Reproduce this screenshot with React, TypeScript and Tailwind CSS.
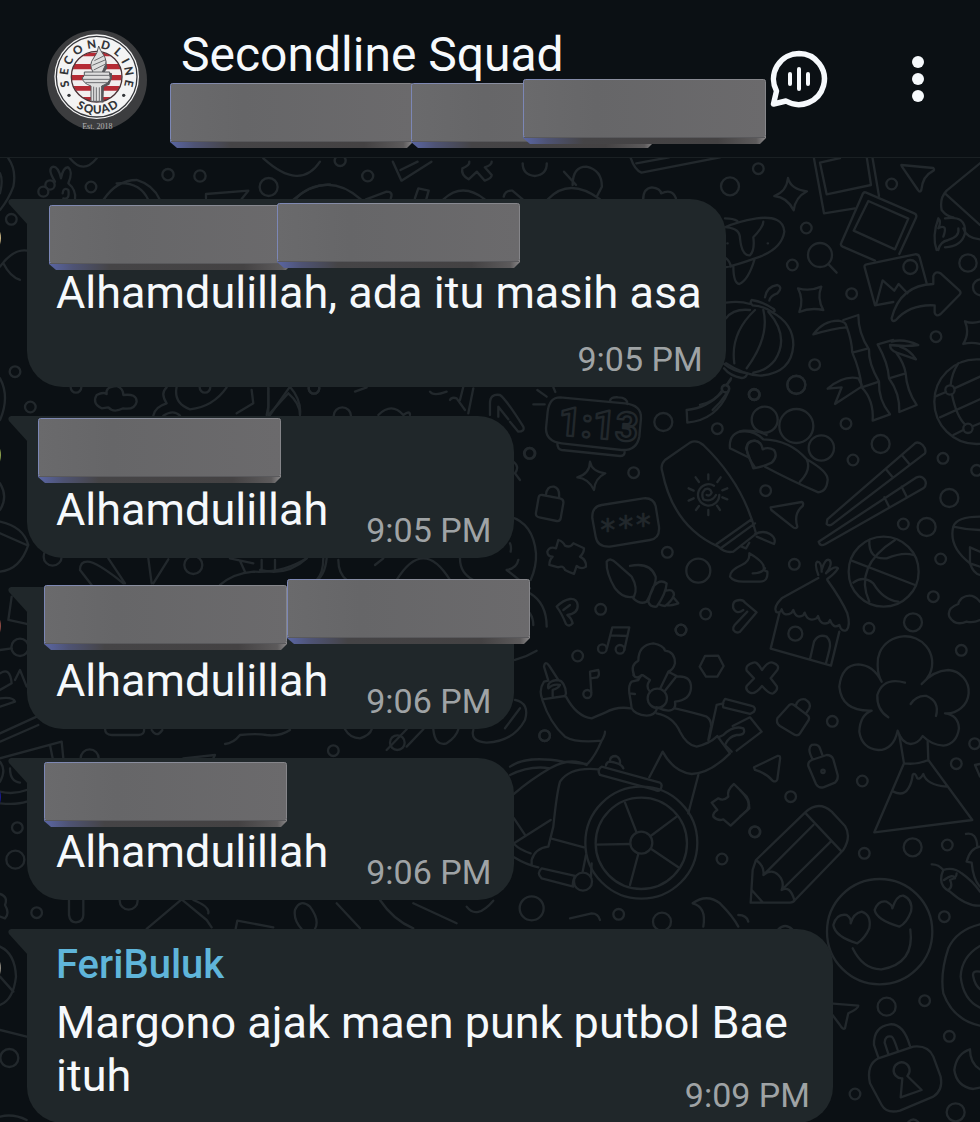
import React from 'react';

interface DoodleGroup {
  at: string;
  dots?: number[][];
  paths: string[];
}

// Every group is drawn on its own grid, three units to a pixel
const doodles: DoodleGroup[] = [
  {
    at: 'translate(0 0) scale(0.3333)',
    dots: [[273, 561, 16], [504, 524, 17], [600, 528, 17], [806, 561, 27], [34, 658, 16], [150, 555, 14], [130, 575, 15]],
    paths: [
      'M25 475Q50 510 40 560Q25 600 0 630M0 520q10 20 0 60',
      'M165 545Q140 505 160 500Q175 500 183 535Q190 500 205 502Q220 515 205 550Q230 570 225 600M190 595Q210 600 205 570Q190 560 188 580',
      'M210 475Q250 525 290 475',
      'M310 600Q350 540 410 540Q460 555 480 600M350 550Q420 545 445 600',
      'M790 475Q900 575 960 485M618 595V582L745 572L725 597M885 600Q920 555 990 553',
      'M0 800Q40 745 82 752M10 790Q30 830 60 840',
    ],
  },
  {
    at: 'translate(180 150) scale(0.3444 0.3333)',
    dots: [[545, 78, 16], [465, 32, 16]],
    paths: [
      'M330 148Q430 60 525 148M540 148L600 125Q620 125 612 145',
      'M618 35L643 92L730 35M640 60L690 35',
      'M840 35Q842 45 820 55Q815 75 838 88L862 65L885 92Q905 85 905 75L885 52Q905 45 905 35',
      'M995 40Q995 75 1030 78Q1065 75 1065 40',
      'M682 145L692 115L722 122L715 148M765 148Q820 95 885 148M940 140Q945 120 965 122L995 148',
      'M1068 148Q1130 80 1220 148M1115 65L1150 105M1140 105Q1140 50 1180 50Q1225 60 1225 110L1210 140',
      'M1345 148Q1345 115 1370 112Q1395 115 1397 130Q1430 115 1440 145',
      'M1308 22Q1320 60 1340 68L1568 22M1325 40L1420 22',
    ],
  },
  {
    at: 'translate(700 150) scale(0.3333)',
    dots: [
      [90, 109, 27], [175, 56, 16], [575, 102, 16], [319, 234, 16], [277, 345, 16], [455, 431, 16], [708, 560, 16],
      [344, 644, 16], [289, 704, 27], [163, 734, 16], [804, 339, 26], [631, 351, 21], [360, 315, 36], [77, 716, 11], [843, 412, 24],
    ],
    paths: [
      // stars
      'M264 84Q272 118 321 124Q286 142 281 181Q262 142 223 138Q260 124 264 84Z',
      'M294 415Q330 425 364 410Q350 445 370 480Q330 472 298 486Q312 450 294 415Z',
      'M840 515Q815 522 795 514Q810 550 790 582Q815 575 840 582',
      // photos
      'M341 20L372 190L465 175M517 20L537 138M500 20L513 105L380 133L360 38L420 24',
      'M525 332L428 290Q420 286 424 278L487 135Q490 125 497 127L643 190Q652 194 648 203L598 312M505 153L625 206L585 298L461 242Z',
      'M580 456L525 466L494 352Q492 345 500 343L645 313Q656 312 659 322L680 400M528 465L548 391L583 422L596 402L622 430',
      // arrow, plane, magnifier
      'M575 505Q600 405 700 402V378Q705 362 722 370L778 421Q785 428 778 435L722 492Q708 502 704 488V466Q630 462 588 510Q576 518 575 505Z',
      'M604 45L700 54Q706 60 697 64Q668 78 664 120Q660 130 654 120L606 50Z',
      'M386 343L410 368',
      // saucer
      'M75 205Q100 205 112 213M75 232Q110 215 170 205Q250 195 253 245Q245 300 165 325Q110 345 75 352M80 232Q120 235 120 265Q125 318 150 316Q165 300 160 262Q190 230 190 215M100 348Q100 400 118 402Q145 390 163 330M75 322Q92 335 92 350M203 280h1M82 280h1',
      // lantern
      'M78 458Q120 452 150 462M155 450Q190 455 222 478Q228 486 216 486Q190 468 158 466Q148 458 155 450Z',
      'M215 486Q280 520 280 585Q275 670 180 677Q130 675 78 640M165 480Q90 550 103 640M190 480Q210 560 140 655M205 485Q270 560 225 630Q200 662 160 668M78 505Q100 475 150 480',
      'M195 442Q200 410 232 405Q250 412 232 430Q210 438 208 452M70 640Q100 665 142 670Q138 685 125 684Q90 678 72 655M93 685L80 705M66 722Q45 755 0 765M80 730Q60 760 38 780',
      // bamboo
      'M340 553Q370 512 415 512Q440 515 440 532Q400 535 340 553ZM430 510L475 495Q475 550 507 598Q505 640 537 695M440 530Q455 570 457 608L505 595M457 608Q480 660 485 712L537 695',
      'M485 712Q522 750 518 812L570 793Q535 750 537 695',
      'M383 716Q430 675 475 685L485 705M383 716L425 712L405 762L485 710',
      'M580 570L533 583Q565 640 567 685L617 670M590 610Q612 640 617 670Q620 720 650 765L598 786Q600 730 567 685',
      'M575 575Q610 565 655 585Q620 590 570 585Q570 600 590 608L648 628Q630 600 600 590',
      // comet
      'M840 40L740 122Q718 145 725 180Q740 200 760 202M735 130L840 225M790 235Q800 265 840 268',
      'M710 300Q695 260 715 205Q725 215 715 235Q745 220 730 260M735 205Q800 195 795 250Q785 290 735 292M715 300Q720 275 745 270Q780 260 775 235',
    ],
  },
  {
    at: 'translate(510 380) scale(0.3333)',
    dots: [
      [460, 126, 27], [60, 220, 16], [371, 278, 16], [622, 146, 16], [733, 44, 16], [472, 517, 16], [565, 572, 36],
      [272, 688, 16], [587, 702, 16], [513, 750, 16], [646, 26, 11],
    ],
    paths: [
      // alarm clock
      'M82 30L110 50M70 73H104M130 22L136 36',
      'M150 52L345 70Q395 75 393 115L388 170Q380 212 335 210L155 190Q108 185 108 145L113 95Q118 52 150 52ZM300 65Q300 50 325 52Q352 52 352 72M142 190Q142 208 155 210L330 228Q345 228 344 214',
      'M530 90Q590 85 635 38M530 90L532 128Q620 120 655 35M650 15L662 0',
      'M240 245Q245 275 286 280Q255 295 252 330Q235 295 202 292Q240 280 240 245Z',
      // lock and code card
      'M97 345L150 355Q162 358 160 370L152 415Q150 425 140 423L88 412Q76 410 78 398L86 352Q88 344 97 345ZM108 345Q110 318 132 320Q150 325 147 353',
      'M275 375L400 355Q430 352 437 378L447 440Q450 475 420 480L300 500Q262 502 257 470L247 415Q245 380 275 375Z',
      // puzzle
      'M145 480Q160 485 165 497Q180 505 190 490L222 505Q222 520 210 530Q230 540 228 560Q215 570 200 558L192 582Q180 578 165 570Q160 555 145 562L118 555Q118 540 128 530Q112 530 112 515Q118 498 138 505Z',
      // sun cream
      'M738 460Q700 310 580 195Q560 178 540 188L465 240Q450 255 457 275Q490 440 625 500Q645 520 670 515L740 460M620 492L725 418M632 505L735 430M695 500L708 505L718 488',
      'M590 345Q600 350 605 338Q600 322 585 328Q572 340 580 358Q605 368 618 345M628 345A32 32 0 1 1 612 317M595 283V298M632 292L622 306M652 325L637 331M652 358L637 352M630 390L621 377M595 405V390M558 390L567 378M536 362L551 355M536 325L551 332M557 292L567 306',
      // shell
      'M290 545Q300 530 320 550L365 590Q385 625 372 650Q340 658 315 625Q288 580 290 545ZM360 558Q420 545 437 590Q440 610 410 665Q390 675 370 655M430 620Q450 595 470 610Q468 640 440 680Q420 682 415 665Q420 640 430 620M468 632Q490 625 492 645Q485 665 465 678Q455 678 445 672M490 652L505 670Q480 678 468 676',
      'M140 680Q155 700 168 732Q178 742 188 730Q185 715 172 705Q205 700 203 675Q200 655 180 657Q160 660 140 680ZM160 690L180 675',
      'M700 690Q680 705 670 685Q665 660 690 660Q700 660 705 668L740 697L690 755Q678 762 670 750Q668 742 674 735L712 695',
      'M0 410Q70 430 78 520Q80 560 62 600M60 640Q110 670 110 740',
      'M660 205Q655 160 700 152Q740 150 770 165M660 205L715 232M735 262Q700 215 715 190Q735 175 750 190',
    ],
  },
  {
    at: 'translate(740 380) scale(0.3333)',
    dots: [
      [42, 43, 16], [169, 15, 27], [318, 131, 16], [422, 192, 27], [339, 240, 16], [77, 332, 16], [490, 432, 16],
      [560, 441, 27], [609, 235, 16], [628, 354, 27], [710, 271, 16], [602, 537, 16], [163, 553, 16], [580, 650, 16],
      [519, 727, 27], [387, 745, 16], [74, 119, 39], [169, 138, 51], [244, 204, 38], [431, 575, 105],
      [166, 761, 21], [710, 65, 127], [630, 30, 14], [684, 145, 14],
    ],
    paths: [
      'M643 25L720 -10M618 36L585 50M600 112L720 58M636 44Q650 110 676 134M640 165L670 150M700 138L720 130M632 15Q635 -20 655 -50',
      'M0 155Q40 148 70 178Q150 180 200 238Q265 275 263 300Q260 335 235 337Q150 300 75 260M200 238Q215 270 180 305',
      'M40 265L18 205Q22 180 45 182Q65 185 68 208Q85 200 102 210Q115 230 95 248Q70 260 40 265Z',
      'M45 462Q70 450 90 462Q110 475 102 492L50 470',
      'M92 382L185 366Q192 368 188 378Q160 400 172 440Q168 448 160 442L94 390Z',
      // chopsticks
      'M262 418L525 190Q535 183 548 195Q560 208 555 220L280 430Q268 440 260 432ZM438 268L458 292M488 228L508 252',
      'M236 485L530 292Q545 285 555 300Q562 315 550 325L255 493Q240 500 236 485ZM433 352L448 382M485 320L500 350',
      // basketball
      'M388 480Q385 540 440 535Q490 515 520 525M465 480Q340 560 388 665M335 542L525 615M340 608Q370 585 400 610Q430 660 475 665',
      'M720 410Q650 410 640 440Q625 500 690 550Q700 580 720 585M640 440Q680 450 720 450M690 502L720 515M690 502V550L720 560',
      'M28 520Q30 545 5 555Q-30 570 -30 590Q-20 605 10 605H60Q85 605 82 575L70 570Q80 550 28 520M38 580Q65 580 75 565',
      // hut
      'M235 594L125 655Q100 680 108 695Q120 702 125 688Q130 712 155 698L160 690Q168 718 190 706L194 698Q204 728 230 715L234 708Q242 738 266 728L270 720Q280 748 298 735Q305 758 320 750Q332 735 322 700Q305 660 262 600',
      'M235 585Q222 550 232 545Q245 545 245 575M245 570Q255 535 268 540Q280 550 258 580M260 578Q285 555 294 565Q285 580 262 597',
      'M118 700L92 806L273 857L298 755M210 838L222 785Q235 760 260 770Q275 785 268 810L258 850',
      'M720 665Q695 635 665 655Q655 665 655 672Q620 685 628 710Q645 740 680 725Q700 730 720 720',
    ],
  },
  {
    at: 'translate(510 620) scale(0.3333)',
    dots: [
      [513, 30, 16], [203, 108, 16], [104, 347, 16], [734, 635, 16], [636, 717, 16], [326, 883, 16], [65, 865, 36],
      [456, 905, 27], [277, 86, 13], [330, 88, 13], [232, 222, 12], [442, 235, 29], [394, 668, 168], [394, 670, 137],
      [394, 668, 33], [219, 785, 27],
    ],
    paths: [
      'M291 84L307 22L358 22L343 90M303 46L353 48M244 218L240 155L265 150Q270 165 262 172L242 175',
      // raised hand and arm
      'M102 140Q105 120 118 138L145 180Q165 185 168 220L165 228L97 238Q85 210 102 185L115 182ZM145 180Q110 182 115 205Q130 190 150 195Q145 205 128 210V230M97 240Q120 310 165 350Q200 370 275 362Q285 345 285 335M275 362Q255 410 232 432M168 230Q200 290 245 295Q270 285 285 278Q320 258 362 265',
      // head with headphones
      'M365 265Q362 240 358 220L375 222M358 220Q355 195 365 185L385 180Q395 160 402 168L420 180Q405 200 420 215M372 165Q360 135 385 122Q385 75 430 70Q460 75 465 92Q495 95 495 130Q490 150 475 155M370 165Q380 180 395 165M450 207L475 155L500 168L465 212M500 170Q545 165 543 205Q540 240 495 245Q500 270 475 272Q455 270 440 262M365 265Q375 285 410 287Q435 285 440 268',
      'M440 280Q490 290 510 335Q530 375 560 380Q600 370 620 350M495 265Q560 280 590 290Q605 300 603 320L595 360M418 472L458 395Q490 455 545 462Q600 460 660 400L622 348',
      'M625 352L640 345Q670 315 700 325Q710 345 680 345Q655 350 645 375L665 395M668 318L720 292L755 335L680 392M598 355L620 255L640 250M645 237L725 258Q740 262 732 275L720 282L640 262Q636 248 645 237ZM565 465L535 580',
      // wheelchair
      'M275 440L450 488Q460 495 450 510Q445 515 435 510L270 465Q260 450 275 440ZM288 436Q290 425 300 425Q335 430 340 445M300 422Q300 408 318 408Q332 415 330 430',
      'M380 638L345 548M422 648L500 590M425 688L505 742M385 702L360 795M360 672L258 674',
      'M230 435Q180 410 120 445Q60 480 12 522M265 448Q180 440 150 485Q140 520 130 620L115 680Q75 685 65 720L65 735M122 655L222 682M0 440Q50 405 160 425L230 432M0 465Q60 435 120 445M12 595L45 645M12 670L122 600M12 672Q30 690 62 700M12 712Q50 735 85 742M228 705L218 755M95 745L195 768Q185 790 190 800L95 775Q78 760 95 745ZM245 730L243 770',
      'M585 108L625 107L641 138L622 170L588 170L569 140Z',
      'M672 492L710 530Q722 550 712 570L662 617L640 598Q625 605 610 590Q608 578 622 570L605 548L625 535Q640 545 655 530Q650 510 672 492Z',
      'M548 850Q590 820 630 850Q670 890 685 920M548 850Q590 860 580 920M685 885q25 0 30 20M180 895L245 880Q265 880 270 900',
    ],
  },
  {
    at: 'translate(740 640) scale(0.3333)',
    dots: [
      [277, 244, 16], [664, 31, 16], [704, 311, 16], [649, 371, 16], [367, 423, 16], [152, 470, 16], [45, 576, 16],
      [373, 640, 16], [622, 615, 16], [518, 622, 27], [249, 394, 5],
    ],
    paths: [
      'M40 68Q50 62 66 90Q85 62 98 68Q120 75 112 90L92 115L110 138Q115 150 100 160Q90 165 66 138Q45 165 30 158Q15 150 20 138L42 115L20 92Q15 75 40 68Z',
      'M148 195L112 235Q107 248 120 258L165 285Q175 288 180 280L206 240Q210 230 200 224L162 195Q155 190 148 195ZM168 195Q175 175 195 178Q215 190 208 205L197 222',
      'M42 382L112 348Q122 345 120 358L112 418Q108 428 98 422Q80 400 45 390Z',
      'M215 360L260 345Q275 345 280 358L293 405Q295 420 285 428L250 442Q235 445 228 432L205 378Q203 365 215 360ZM218 358Q200 325 215 315Q235 310 240 325L247 345',
      // volcano
      'M425 125Q413 105 413 75A82 80 0 1 1 545 132Q580 92 625 90A66 65 0 0 1 615 220Q655 225 657 265Q650 312 610 317Q575 315 548 288Q535 310 512 312Q485 310 473 272Q460 330 415 330Q365 325 358 275Q360 225 395 212Q305 215 298 140Q305 75 355 73Q400 75 425 125M495 128Q430 110 412 165Q410 210 445 232M512 192Q530 165 560 168Q600 185 588 228',
      'M478 285L492 370L403 577L697 540L565 360L563 305M492 370Q530 375 565 360M460 455Q490 470 505 445Q515 430 518 405Q525 395 532 415Q540 420 550 402Q560 435 620 440',
      // pencil
      'M48 660L195 518Q235 480 275 515L315 558Q335 590 310 630L165 780Q160 788 150 788H32L38 690ZM195 518L305 635M220 555L75 700M272 605L125 750M48 660Q75 680 70 705Q95 685 115 705Q135 725 125 750Q150 735 163 780M35 750L68 787',
      'M0 450Q30 480 28 505L0 530',
      // peppers
      'M575 673Q595 672 610 690Q640 680 665 700Q700 725 720 755M610 690Q590 735 630 755Q680 800 720 797M625 750q15 -10 5 -30q20 -5 20 -20M612 720Q640 700 645 715M678 582Q710 575 712 620M720 620Q690 625 680 665L695 668Q700 720 720 740',
      'M705 375L720 372M705 375L720 410M115 868q20 -20 42 0',
    ],
  },
  {
    at: 'translate(740 860) scale(0.3333)',
    dots: [[613, 170, 16], [440, 440, 27], [554, 422, 16], [628, 529, 16], [345, 702, 16], [647, 757, 27], [419, 215, 158]],
    paths: [
      'M352 250Q285 230 280 195Q290 160 320 165Q335 175 332 190Q340 160 365 155Q395 165 388 205Q375 235 352 250ZM478 200Q410 180 404 150Q415 120 440 125Q458 135 457 145Q470 105 490 107Q520 120 513 155Q500 190 478 200ZM338 265Q370 330 425 328Q525 310 511 208',
      'M720 193Q650 210 625 265Q600 340 610 400Q640 480 720 497M720 258Q665 290 662 350Q670 420 720 443M720 335Q695 330 700 350Q705 375 720 387',
      'M270 430L355 437Q355 445 325 460Q320 480 315 505Q308 510 300 495L270 455',
      // padlock
      'M416 595L402 555Q400 500 450 493Q490 490 510 558M445 582L434 548Q435 525 455 530Q462 535 473 570M415 595L520 560Q565 555 580 590L602 650Q610 690 580 710L480 752Q440 762 425 735L390 670Q378 615 415 595Z',
      'M487 655A24 24 0 1 1 502 648L545 690L482 712Z',
      'M690 568Q650 580 643 630Q650 680 700 687L720 683M690 568Q690 610 720 628M505 786q15 -15 30 0',
    ],
  },
  {
    at: 'translate(0 370) scale(0.3333)',
    dots: [[45, 5, 16], [91, 111, 16], [228, 52, 16], [158, 560, 27], [580, 585, 27], [615, 52, 16], [942, 55, 16], [60, 832, 26]],
    paths: [
      'M305 115Q275 100 290 75Q310 65 320 72Q315 50 350 48Q370 55 370 75Q410 70 410 95Q405 120 370 115Q340 130 325 112Z',
      'M460 137Q465 110 500 100Q480 70 500 52M530 50Q520 100 570 118Q640 110 680 52M490 137q30 -20 50 0M710 130L760 100L755 60M810 135L870 50Q905 90 900 135M805 50V135',
      'M0 25Q30 80 0 150M0 455Q70 470 85 525Q60 600 0 605M0 490L80 525M0 340Q25 380 0 420',
      'M240 600Q240 575 262 575Q290 575 370 640M240 600L275 645M325 565L375 640M445 565L455 640M505 568L460 640',
      'M690 565L760 580M660 645Q700 610 760 605Q850 610 920 565M980 565Q975 620 940 640M720 572L735 605',
      'M35 680L25 750L80 762M0 840L35 835M0 910Q30 890 35 940L0 960M45 930L60 900L80 950',
    ],
  },
  {
    at: 'translate(0 690) scale(0.3333)',
    dots: [[269, 205, 27], [52, 413, 16], [46, 509, 27], [110, 668, 16], [386, 632, 27], [28, 1104, 27]],
    paths: [
      'M0 25Q40 20 45 35L0 50M0 130L110 80M0 155L115 105M0 205L185 155L190 205M150 165L158 205',
      'M315 115Q315 135 335 135H415Q435 135 432 115M455 120q15 25 32 0M675 162Q700 160 720 135Q770 130 800 135Q840 140 870 120M550 205L645 195L640 205',
      'M0 215Q20 240 0 275M30 235Q30 275 60 278M0 305Q40 315 80 300M0 340Q50 345 80 335M0 612Q25 620 15 645Q30 670 15 685L0 680',
      'M207 630V675Q210 697 228 697Q250 695 250 675V630M440 717L545 628L620 690L635 712M580 630Q630 650 625 670M707 717L712 692L820 712M945 717Q960 690 930 650Q900 625 885 660Q880 690 905 717',
      'M1010 640L1080 715M1140 630Q1180 690 1240 715M1240 640L1370 700M1400 650Q1430 690 1480 632',
      'M0 770Q45 790 48 860Q40 930 0 945M0 860L40 905M0 1020L80 1040M0 1280q40 -10 80 10',
    ],
  },
  {
    at: 'translate(260 380) scale(0.3333)',
    dots: [[162, 25, 16], [808, 220, 16], [854, 1067, 16], [412, 1088, 22], [247, 108, 26], [220, 1112, 16]],
    paths: [
      'M25 25V80L20 105M85 40L30 100M85 40Q120 70 120 105M355 105q40 -40 75 0q20 -15 20 0M285 35L320 22',
      'M510 35Q520 50 560 35M570 60Q575 50 590 55L615 90M610 20L600 60M640 25L625 100M690 105V70Q690 40 720 45Q740 60 790 140Q795 155 775 155L750 125M715 110V80L745 118',
      'M760 245Q780 260 765 280L780 300M750 490Q755 500 752 515M600 535Q600 580 640 600M775 540Q770 565 740 570L810 625',
      'M410 600Q490 470 570 600M235 540Q235 580 260 600M345 555L370 535M0 570Q80 590 140 535M190 535Q190 580 170 600M45 540V575M5 540V570',
      'M810 700Q820 715 820 735M765 840Q800 830 830 812',
      'M765 960Q810 970 795 1020Q760 1085 680 1088Q630 1085 640 1050M735 1045L780 985M520 1048Q525 1100 560 1090Q590 1070 595 1048M380 1110L440 1048M440 1100L490 1048M255 1048Q270 1075 300 1075Q330 1065 335 1048',
    ],
  },
];

const Wallpaper = () => (
  <svg aria-hidden="true" className="absolute inset-0 size-full text-[#22282c]">
    <g
      transform="translate(0 -158)"
      fill="none"
      stroke="currentColor"
      strokeWidth={7}
      strokeLinecap="round"
      strokeLinejoin="round"
    >
      {doodles.map((group) => (
        <g key={group.at} transform={group.at}>
          {group.dots?.map(([cx, cy, r]) => (
            <circle key={`${cx}-${cy}-${r}`} cx={cx} cy={cy} r={r} />
          ))}
          {group.paths.map((d) => (
            <path key={d} d={d} />
          ))}
        </g>
      ))}
      <g transform="translate(510 380) scale(0.3333)">
        <text x={142} y={164} fontSize={120} fontWeight={700} fontFamily="Roboto, sans-serif" transform="rotate(5 142 164)">
          1:13
        </text>
        <g fill="currentColor" strokeWidth={2} fontSize={90} fontFamily="DejaVu Sans, sans-serif" textAnchor="middle">
          <text x={293} y={480}>*</text>
          <text x={347} y={472}>*</text>
          <text x={400} y={464}>*</text>
        </g>
      </g>
    </g>
  </svg>
);

const topLetters: [string, number][] = [
  ['S', -103], ['E', -81], ['C', -60], ['O', -35], ['N', -9], ['D', 16], ['L', 41], ['I', 61], ['N', 80], ['E', 102],
];
const bottomLetters: [string, number][] = [['S', 29], ['Q', 14], ['U', -1], ['A', -15], ['D', -30]];

const GroupAvatar = () => (
  <svg viewBox="0 0 300 300" className="mt-[3px] size-[100px] shrink-0" role="img" aria-label="Secondline Squad">
    <defs>
      <clipPath id="disc">
        <circle cx="149" cy="140" r="75" />
      </clipPath>
    </defs>
    <circle cx="150" cy="150" r="150" fill="#3c3d3f" />
    <circle cx="149" cy="140" r="127" fill="#f4f4f4" />
    <circle cx="149" cy="140" r="121" fill="none" stroke="#35373b" strokeWidth="4" />
    <g clipPath="url(#disc)">
      <rect x="70" y="60" width="160" height="160" fill="#f2eeee" />
      <path d="M70 68h160v11H70zM70 102h160v16H70zM70 135h160v16H70zM70 168h160v14H70zM70 201h160v9H70z" fill="#b52a34" />
    </g>
    <circle cx="149" cy="140" r="76" fill="none" stroke="#4a3236" strokeWidth="4" />
    <path d="M163 62l14 30 4 22-8 12 22 4v14l-8 20-16 8-2 46-20-4V70z" fill="#55565a" />
    <path
      d="M155 48Q160 62 168 72Q184 96 172 112L166 126H188V136L190 144Q186 160 164 168V214H132V168Q108 160 106 144L112 136V126H138Q124 104 140 84Q152 70 155 48Z"
      fill="#dedede"
      stroke="#55565a"
      strokeWidth="3"
    />
    <path
      d="M112 136H188M106 148H190M116 158H180M138 126H166M140 170V214M148 172V214M157 172V214M142 92L170 78M136 106L174 90M140 120L176 102"
      fill="none"
      stroke="#6d6e71"
      strokeWidth="3"
    />
    <g fill="#333538" fontFamily="Lato, sans-serif" fontSize="35" fontWeight="900" textAnchor="middle">
      {topLetters.map(([char, angle]) => (
        <text key={angle} x="149" y="54" transform={`rotate(${angle} 149 140)`}>
          {char}
        </text>
      ))}
      {bottomLetters.map(([char, angle]) => (
        <text key={angle} x="149" y="251" transform={`rotate(${angle} 149 140)`}>
          {char}
        </text>
      ))}
    </g>
    <circle cx="66" cy="196" r="5" fill="#333538" />
    <circle cx="230" cy="196" r="5" fill="#333538" />
    <text x="151" y="296" fill="#b4b4b4" fontFamily="Liberation Serif, serif" fontSize="24" textAnchor="middle">
      Est. 2018
    </text>
  </svg>
);

// Grey slab that hides a name
const Slab = ({ className }: { className: string }) => (
  <svg viewBox="0 0 243 65" aria-hidden="true" className={`absolute h-[65px] w-[243px] ${className}`}>
    <defs>
      <linearGradient id="slab-face" x1="0" y1="0" x2="1" y2="0">
        <stop offset="0" stopColor="#6a6a6c" />
        <stop offset="0.3" stopColor="#666668" />
        <stop offset="1" stopColor="#6b6a6c" />
      </linearGradient>
      <linearGradient id="slab-base" x1="0" y1="0" x2="1" y2="0">
        <stop offset="0" stopColor="#5a66a4" />
        <stop offset="0.1" stopColor="#4e5374" />
        <stop offset="0.25" stopColor="#454446" />
        <stop offset="0.8" stopColor="#444243" />
        <stop offset="0.96" stopColor="#5c5a5b" />
        <stop offset="1" stopColor="#8a8889" />
      </linearGradient>
      <linearGradient id="slab-edge" x1="0" y1="0" x2="1" y2="0">
        <stop offset="0" stopColor="#7c87b6" />
        <stop offset="0.4" stopColor="#8b8f9d" />
        <stop offset="1" stopColor="#858589" />
      </linearGradient>
    </defs>
    <path d="M0 57H243V59L237 65H7L0 59Z" fill="url(#slab-base)" />
    <rect x="0.5" y="0.5" width="242" height="58" rx="2" fill="url(#slab-face)" stroke="url(#slab-edge)" />
    <path d="M1 58.5H242" stroke="#59595c" />
  </svg>
);

interface Message {
  id: number;
  avatar: string;
  author?: string;
  slabs?: string[];
  text: string;
  time: string;
  timePlace: 'beside' | 'below' | 'tucked';
}

const messages: Message[] = [
  {
    id: 1,
    avatar: 'bg-[#c9b382]',
    slabs: ['left-[22px] top-[6px]', 'left-[250px] top-[4px]'],
    text: 'Alhamdulillah, ada itu masih asa',
    time: '9:05 PM',
    timePlace: 'below',
  },
  { id: 2, avatar: 'bg-[#8a9f4c]', slabs: ['left-[11px] top-[2px]'], text: 'Alhamdulillah', time: '9:05 PM', timePlace: 'beside' },
  {
    id: 3,
    avatar: 'bg-[#8c4a44]',
    slabs: ['left-[17px] -top-[2px]', 'left-[260px] -top-[8px]'],
    text: 'Alhamdulillah',
    time: '9:06 PM',
    timePlace: 'beside',
  },
  { id: 4, avatar: 'bg-[#1a1a8c]', slabs: ['left-[17px] top-[4px]'], text: 'Alhamdulillah', time: '9:06 PM', timePlace: 'beside' },
  {
    id: 5,
    avatar: 'bg-[#8f8a80]',
    author: 'FeriBuluk',
    text: 'Margono ajak maen punk putbol Bae ituh',
    time: '9:09 PM',
    timePlace: 'tucked',
  },
];

const bodyClass = {
  beside: 'flex items-end gap-[38px]',
  below: 'flex flex-col gap-5',
  tucked: 'flow-root',
};
const textClass = {
  beside: 'pb-[14px]',
  below: 'pr-px',
  tucked: '',
};
const timeClass = {
  beside: 'shrink-0',
  below: 'self-end',
  tucked: 'float-right mt-[26px]',
};

const MessageRow = ({ message }: { message: Message }) => (
  <li className="flex items-start gap-[26px]">
    <span className={`-ml-[39px] mt-[19px] size-10 shrink-0 rounded-full ${message.avatar}`} />
    <div className="relative max-w-[806px] rounded-[36px] rounded-tl-none bg-[#20272a] pt-3 pr-[23px] pb-2 pl-[29px]">
      <svg viewBox="0 0 20 26" aria-hidden="true" className="absolute top-0 -left-[19px] h-[26px] w-[20px] text-[#20272a]">
        <path d="M20 0H3Q-1 1 1 5L20 26Z" fill="currentColor" />
      </svg>
      <p className="mb-[7px] h-12 text-[40px] leading-[48px] font-medium text-[#5fb5da]">{message.author}</p>
      <div className={bodyClass[message.timePlace]}>
        <span className={`text-[45px] leading-[53px] text-[#f6f9fc] ${textClass[message.timePlace]}`}>{message.text}</span>
        <time className={`text-[34px] leading-10 whitespace-nowrap text-[#9fa3a5] ${timeClass[message.timePlace]}`}>
          {message.time}
        </time>
      </div>
      {message.slabs?.map((place) => (
        <Slab key={place} className={place} />
      ))}
    </div>
  </li>
);

const ChatHeader = () => (
  <header className="relative flex shrink-0 items-start border-b border-[#1a2023] bg-[#0b1014] pt-[27px] pr-[42px] pb-[10px] pl-[47px]">
    <GroupAvatar />
    <div className="ml-[34px] min-w-0 flex-1">
      <h1 className="h-14 text-[48px] leading-[56px] whitespace-nowrap text-[#f6f9fc]">Secondline Squad</h1>
      <div className="relative h-16">
        <Slab className="top-0 -left-[11px]" />
        <Slab className="top-0 left-[230px]" />
        <Slab className="-top-[4px] left-[342px]" />
      </div>
    </div>
    <button type="button" aria-label="Voice chat" className="mt-[23px] shrink-0 text-[#f6f9fc]">
      <svg viewBox="0 0 58 58" className="size-[58px]" fill="none" stroke="currentColor" strokeLinecap="round" strokeLinejoin="round">
        <path d="M29 3.5A25.5 25.5 0 1 1 16 51L3.5 54L6.5 41A25.5 25.5 0 0 1 29 3.5Z" strokeWidth="5.5" />
        <path d="M29 19V39M20 24V34M38 24V34" strokeWidth="4" />
      </svg>
    </button>
    <button type="button" aria-label="More options" className="mt-[23px] ml-[70px] shrink-0 text-[#f6f9fc]">
      <svg viewBox="0 0 40 58" className="h-[58px] w-10" fill="currentColor">
        <circle cx="20" cy="12" r="6" />
        <circle cx="20" cy="29" r="6" />
        <circle cx="20" cy="46" r="6" />
      </svg>
    </button>
  </header>
);

export default function App() {
  return (
    <div className="flex h-screen flex-col overflow-hidden bg-[#0b1014] font-[Roboto,sans-serif]">
      <ChatHeader />
      <main className="relative flex-1 overflow-hidden">
        <Wallpaper />
        <ul className="relative flex flex-col gap-[29px] pt-[41px]">
          {messages.map((message) => (
            <MessageRow key={message.id} message={message} />
          ))}
        </ul>
      </main>
    </div>
  );
}
